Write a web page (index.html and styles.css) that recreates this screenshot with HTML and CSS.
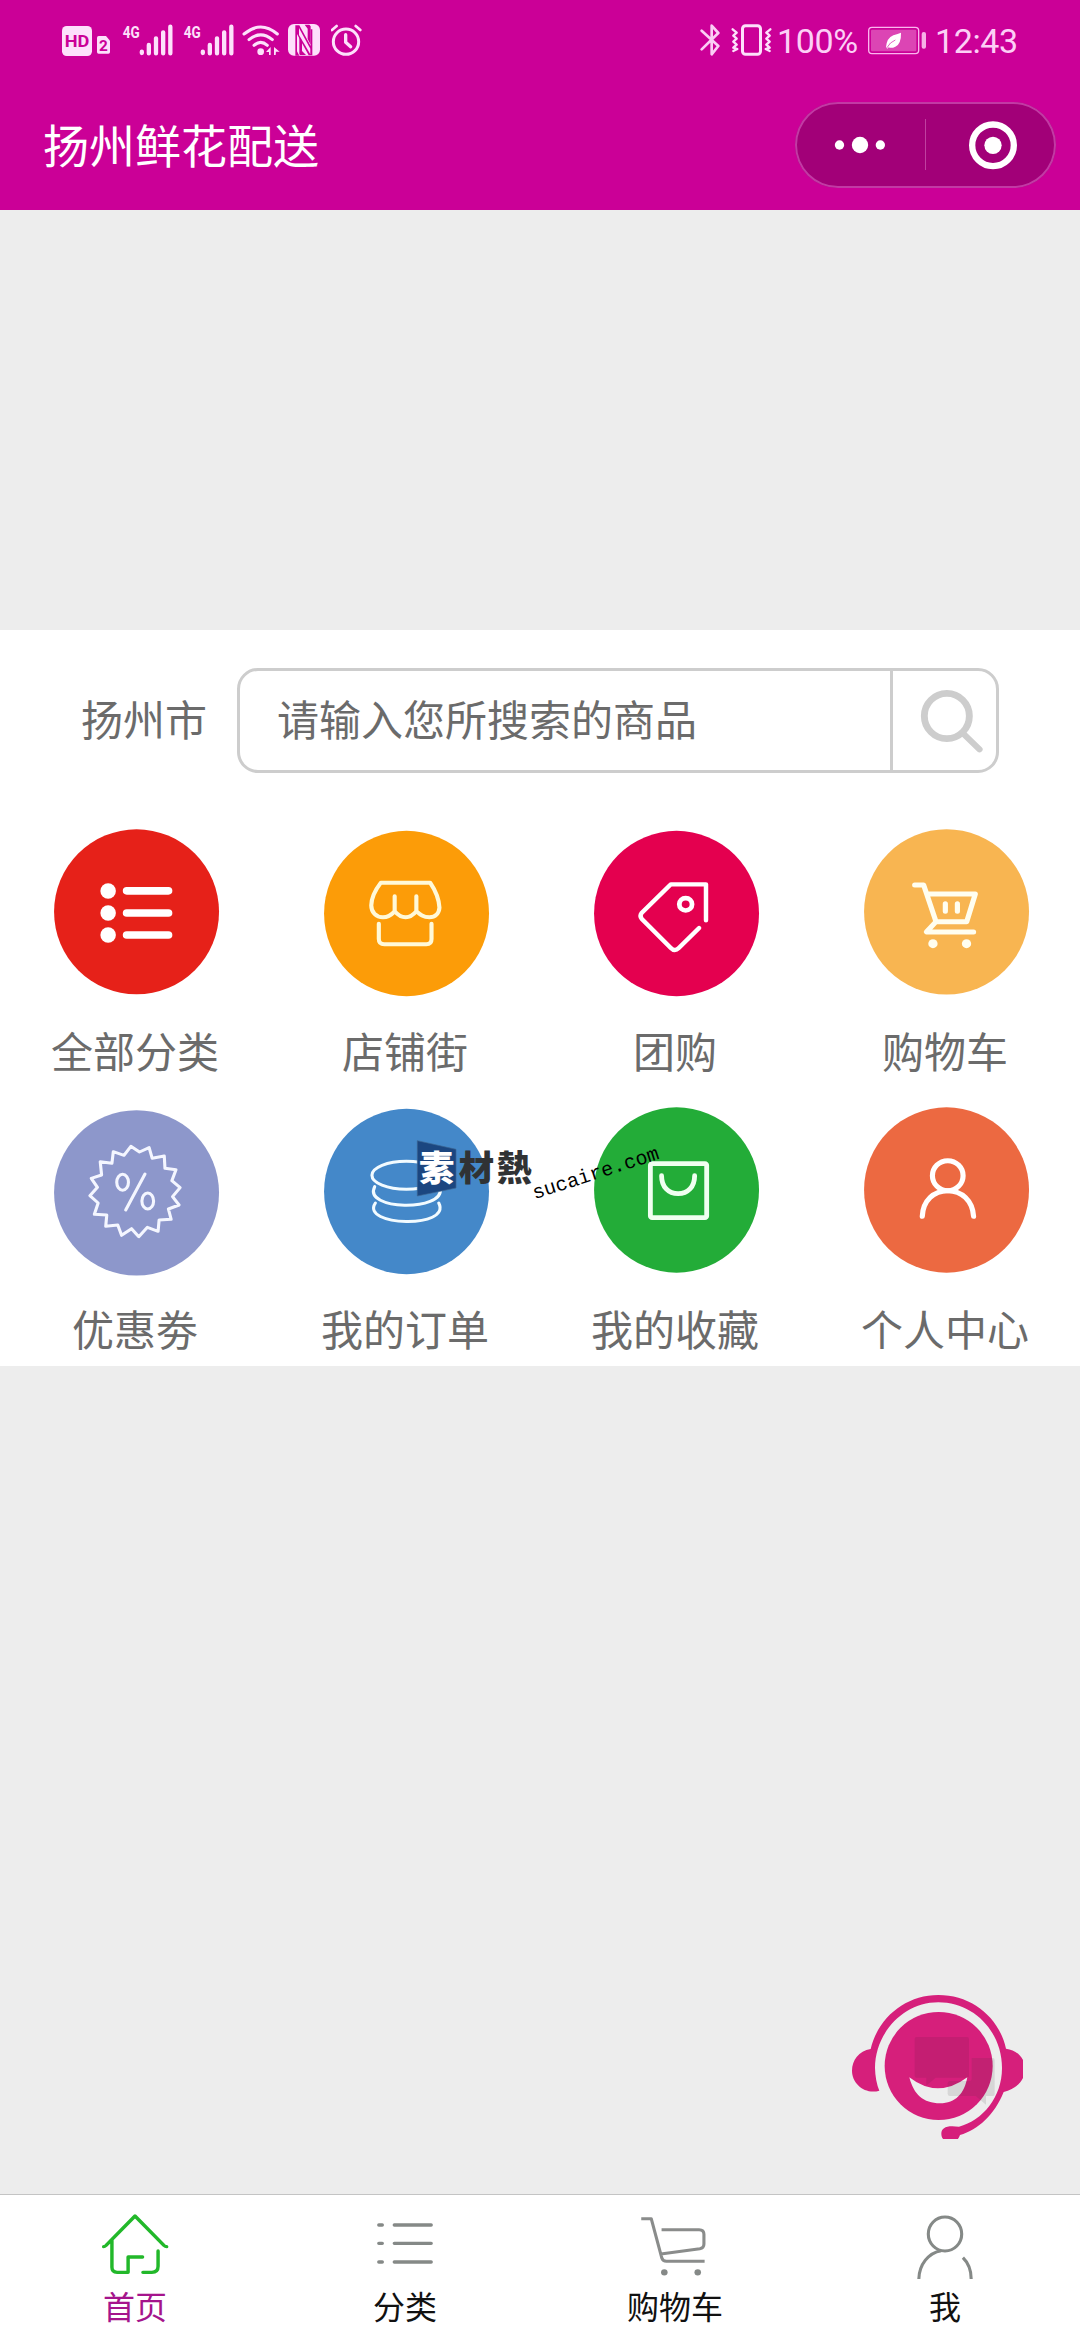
FILE: index.html
```html
<!DOCTYPE html>
<html lang="zh-CN">
<head>
<meta charset="utf-8">
<title>扬州鲜花配送</title>
<link rel="stylesheet" href="styles.css">
</head>
<body>
<div class="app">
  <header class="header">
    <div class="status">
      <div class="status-left">
        <svg class="hd" width="30" height="36" viewBox="66 66 90 108"><rect x="66" y="78" width="90" height="90" rx="14" fill="#fde0fb"/><text x="111" y="142" text-anchor="middle" textLength="74" lengthAdjust="spacingAndGlyphs" class="hd-text">HD</text></svg>
        <svg class="sim" width="13" height="36" viewBox="171 66 39 108"><path d="M176 108h22l12 14v34q0 5-5 5h-29q-5 0-5-5v-43q0-5 5-5z" fill="#fde0fb"/><text x="190" y="154" text-anchor="middle" class="sim-text">2</text></svg>
        <svg class="signal" width="51" height="36" viewBox="246 66 153 108"><text x="248" y="113" textLength="51" lengthAdjust="spacingAndGlyphs" class="net-text">4G</text><g stroke="#fde0fb" stroke-width="13" stroke-linecap="round"><path d="M305.500 155v4M326.500 135v25M348 115v45M369.500 97v63M391 80v80"/></g></svg>
        <svg class="signal2" width="51" height="36" viewBox="246 66 153 108"><text x="248" y="113" textLength="51" lengthAdjust="spacingAndGlyphs" class="net-text">4G</text><g stroke="#fde0fb" stroke-width="13" stroke-linecap="round"><path d="M305.500 155v4M326.500 135v25M348 115v45M369.500 97v63M391 80v80"/></g></svg>
        <svg class="wifi" width="38" height="36" viewBox="606 66 114 108"><g fill="none" stroke="#fde0fb" stroke-width="9" stroke-linecap="round"><path d="M612 102Q662 60 712 102M627 119Q662 90 697 119M642 136Q662 118 682 136"/></g><circle cx="662" cy="155" r="10" fill="#fde0fb"/><path d="M678 156l14-15v24h-5v-9zM702 141l17 14h-11v-2l-1 12h-5z" fill="#fde0fb"/></svg>
        <svg class="nfc" width="32" height="36" viewBox="744 66 96 108"><rect x="744" y="72" width="96" height="95" rx="18" fill="#fde0fb"/><path d="M766 76h12l34 62V88h5v78h-11l-35-64v52l7 13h-12z" fill="#cb0097"/><path d="M777 84l34 62v17l-34-58z" fill="#fde0fb"/><path d="M778 109l8 14v30l12 12h-18l-2-3zM812 134l-9-17V86l-9-12h14l4 5z" fill="#cb0097"/></svg>
        <svg class="alarm" width="31" height="36" viewBox="873 66 93 108"><g fill="none" stroke="#fde0fb" stroke-linecap="round" stroke-linejoin="round"><circle cx="918" cy="125" r="38" stroke-width="9"/><path d="M917 104v23l15 13" stroke-width="10"/><path d="M876 90l14-12M947 78l14 12" stroke-width="8"/></g></svg>
      </div>
      <div class="status-right">
        <svg class="bt" width="21" height="36" viewBox="57 66 63 108"><path d="M62 92l50 46-20 25V77l20 22-50 49" fill="none" stroke="#fbcdf5" stroke-width="8" stroke-linejoin="round" stroke-linecap="round"/></svg>
        <svg class="vib" width="41" height="36" viewBox="150 66 123 108"><g fill="none" stroke="#fde0fb" stroke-linejoin="round" stroke-linecap="round"><rect x="184.500" y="77" width="54" height="86" rx="9" stroke-width="9"/><path d="M155 88l12 10-10 9 10 9-10 9 10 9-10 9 12 4-12 6M268 88l-12 10 10 9-10 9 10 9-10 9 10 9-12 4 12 6" stroke-width="7"/></g></svg>
        <span class="pct">100%</span>
        <svg class="batt" width="60" height="36" viewBox="558 66 180 108"><rect x="563" y="82" width="150" height="79" rx="10" fill="none" stroke="#fbb5ee" stroke-width="4"/><rect x="570" y="89" width="136" height="65" rx="4" fill="#dc45b4"/><rect x="722" y="96" width="13" height="50" rx="6" fill="#f6b0e6"/><path d="M619 146l-4-4q2-28 22-36 14-4 23-8 1 34-17 42-12 6-20 2z" fill="#fff"/><path d="M617 144q10-18 26-24" fill="none" stroke="#dc45b4" stroke-width="2.500"/></svg>
        <span class="time">12:43</span>
      </div>
    </div>
    <div class="titlebar">
      <h1 class="title">扬州鲜花配送</h1>
      <div class="capsule">
        <svg width="261" height="86" viewBox="345 306 783 258"><g fill="#fff"><circle cx="478.500" cy="435" r="14"/><circle cx="540" cy="435" r="24.500"/><circle cx="601" cy="435" r="14"/><circle cx="939" cy="436" r="26"/></g><path d="M736.500 357v153" stroke="#c040a0" stroke-width="3"/><circle cx="939" cy="436" r="62.500" fill="none" stroke="#fff" stroke-width="19"/></svg>
      </div>
    </div>
  </header>
  <main class="content">
    <div class="banner"></div>
    <section class="panel">
      <div class="search-row">
        <span class="city">扬州市</span>
        <div class="search">
          <span class="placeholder">请输入您所搜索的商品</span>
          <div class="search-btn"><svg width="66" height="66" viewBox="1100 203 192 198" preserveAspectRatio="none"><ellipse cx="1181" cy="287" rx="65.500" ry="68" fill="none" stroke="#cdcdcd" stroke-width="20"/><path d="M1231 342l45 45" stroke="#cdcdcd" stroke-width="18" stroke-linecap="round"/></svg></div>
        </div>
      </div>
      <nav class="grid">
        <a class="cell">
          <svg width="270" height="180" viewBox="0 78 784 540" preserveAspectRatio="none"><ellipse cx="396.500" cy="335.500" rx="239.500" ry="247.500" fill="#e62119"/><g fill="#fff"><ellipse cx="314" cy="273" rx="22.500" ry="23"/><ellipse cx="314" cy="339" rx="22.500" ry="23"/><ellipse cx="314" cy="405" rx="22.500" ry="23"/></g><path d="M368 272.500h121M368 339h121M368 405h121" stroke="#fff" stroke-width="23" stroke-linecap="round"/></svg>
          <span>全部分类</span>
        </a>
        <a class="cell">
          <svg width="270" height="180" viewBox="784 78 784 540" preserveAspectRatio="none"><ellipse cx="1180.500" cy="340.500" rx="239.500" ry="248" fill="#fc9c08"/><path d="M1106 248h143q25 38 27 75c-1 17-12 29-29 29-18 0-27-8-38-18-9 11-18 18-31 18s-23-7-32-18c-9 10-18 18-34 18-20 0-34-15-34-36q1-32 28-68zM1146 289v44M1209 289v44M1100 371v46q0 16 16 16h122q15 0 15-16v-46" fill="none" stroke="#fff9d8" stroke-width="12" stroke-linecap="round" stroke-linejoin="round"/></svg>
          <span>店铺街</span>
        </a>
        <a class="cell">
          <svg width="270" height="180" viewBox="0 78 784 540" preserveAspectRatio="none"><ellipse cx="396.500" cy="340.500" rx="239.500" ry="248" fill="#e4004f"/><path d="M482 361V253H380l-85 86q-6 8 0 17l85 88q11 12 23 0l59-60" fill="none" stroke="#fff" stroke-width="13" stroke-linecap="round" stroke-linejoin="round"/><circle cx="423" cy="313" r="18.500" fill="none" stroke="#fff" stroke-width="14"/></svg>
          <span>团购</span>
        </a>
        <a class="cell">
          <svg width="270" height="180" viewBox="784 78 784 540" preserveAspectRatio="none"><ellipse cx="1180.500" cy="335.500" rx="239.500" ry="248" fill="#f8b551"/><g fill="none" stroke="#fffef0" stroke-width="15" stroke-linecap="round" stroke-linejoin="round"><path d="M1088 255h26l36 110-28 31h137M1128 282h136l-25 83h-90M1177 311v23M1212 311v23"/></g><circle cx="1141" cy="431" r="13.500" fill="#fffef0"/><circle cx="1238.500" cy="431" r="13.500" fill="#fffef0"/></svg>
          <span>购物车</span>
        </a>
        <a class="cell">
          <svg width="270" height="180" viewBox="0 42 784 540" preserveAspectRatio="none"><ellipse cx="396.500" cy="308.500" rx="239.500" ry="248" fill="#8d97cb"/><path d="M380 169L405 186 433 173 442 205 477 198 479 235 511 239 499 272 523 293 501 320 520 345 489 357 497 388 462 390 459 424 428 412 403 440 382 416 353 436 342 405 307 409 310 375 274 373 285 339 261 317 283 292 265 265 295 255 291 215 325 220 329 185 360 196Z" fill="none" stroke="#f4f6ff" stroke-width="9" stroke-linejoin="round"/><g fill="none" stroke="#f4f6ff" stroke-width="9" stroke-linecap="round"><ellipse cx="356" cy="277" rx="17" ry="24"/><ellipse cx="429" cy="333" rx="17" ry="24"/><path d="M421 252l-56 108"/></g></svg>
          <span>优惠劵</span>
        </a>
        <a class="cell">
          <svg width="270" height="180" viewBox="784 42 784 540" preserveAspectRatio="none"><ellipse cx="1180.500" cy="304.500" rx="239.500" ry="248" fill="#4488c9"/><g fill="none" stroke="#f2fbff" stroke-width="9" stroke-linecap="round"><ellipse cx="1180" cy="256" rx="100" ry="42"/><path d="M1088 290c-35 72 203 74 190 6M1090 339c-46 70 223 78 184 0"/></g></svg>
          <span>我的订单</span>
        </a>
        <a class="cell">
          <svg width="270" height="180" viewBox="0 42 784 540" preserveAspectRatio="none"><ellipse cx="396.500" cy="300" rx="239.500" ry="248" fill="#23ac38"/><rect x="320.500" y="221" width="163.500" height="162" rx="5" fill="none" stroke="#f0fff0" stroke-width="14"/><path d="M353 257c0 34 20 54 48 54s48-20 48-54" fill="none" stroke="#f0fff0" stroke-width="14" stroke-linecap="round"/></svg>
          <span>我的收藏</span>
        </a>
        <a class="cell">
          <svg width="270" height="180" viewBox="784 42 784 540" preserveAspectRatio="none"><ellipse cx="1180.500" cy="300" rx="239.500" ry="248" fill="#ec6941"/><g fill="none" stroke="#fff" stroke-width="15" stroke-linecap="round"><ellipse cx="1184" cy="257" rx="44.500" ry="45"/><path d="M1110 379c2-48 34-77 74-77s72 29 75 77"/></g></svg>
          <span>个人中心</span>
        </a>
      </nav>
    </section>
  </main>
  <footer class="tabs">
    <a class="tab active">
      <svg width="270" height="100" viewBox="0 45 784 300" preserveAspectRatio="none"><g fill="none" stroke="#22b82a" stroke-width="10" stroke-linecap="round" stroke-linejoin="round"><path d="M301 200q3 0 7-4l84-88 84 88q4 4 8 4M325 180v82q0 15 15 15h32v-46h42M459 213v46q0 18-18 18h-26"/></g></svg>
      <span>首页</span>
    </a>
    <a class="tab">
      <svg width="270" height="100" viewBox="784 45 784 300" preserveAspectRatio="none"><path d="M1100 135h10M1100 190h10M1100 246h10M1145 135h107M1145 190h107M1145 246h107" stroke="#858987" stroke-width="10" stroke-linecap="round"/></svg>
      <span>分类</span>
    </a>
    <a class="tab">
      <svg width="270" height="100" viewBox="0 45 784 300" preserveAspectRatio="none"><path d="M294 116h29l31 119q3 9 13 9h111M353 149h109q14 0 14 14v29q0 12-12 14l-113 16" fill="none" stroke="#8a8c8b" stroke-width="9" stroke-linejoin="round"/><circle cx="361" cy="277" r="9.500" fill="#858987"/><circle cx="458" cy="277" r="9.500" fill="#858987"/></svg>
      <span>购物车</span>
    </a>
    <a class="tab">
      <svg width="270" height="100" viewBox="784 45 784 300" preserveAspectRatio="none"><g fill="none" stroke="#858987" stroke-width="9"><ellipse cx="1176" cy="162" rx="48.500" ry="51"/><path d="M1165 212c-37 6-64 42-65 85M1228 233c14 14 24 38 24 64"/></g></svg>
      <span>我</span>
    </a>
  </footer>
  <svg class="watermark" width="280" height="100" viewBox="0 0 840 300"><path d="M52 62l116 26v116L52 228z" fill="#1b4680" stroke="#3d6591" stroke-width="2"/><text x="57" y="184" class="wm-cjk wm-light">素</text><text x="176" y="184" class="wm-cjk">材</text><text x="290" y="184" class="wm-cjk">熱</text><text x="404" y="238" class="wm-url" transform="rotate(-18 404 238)">sucaire.com</text></svg>
  <svg class="service" width="171" height="144" viewBox="96 105 513 432"><g fill="#d61f7b"><circle cx="356" cy="318" r="162"/><path d="M152 267c-36 6-56 34-56 65 0 39 38 72 82 60q-12-28-13-68c0-105 85-197 190-197 106 0 191 87 191 197 0 88-58 157-129 176-36-5-53 2-53 21 0 12 7 22 18 22h22c7 0 12-8 16-18 55-16 103-60 131-129 39-10 64-35 64-69 0-32-23-57-57-61-20-93-102-161-203-161-98 0-181 68-203 162z"/></g><path d="M268 352q85 66 174 0c-9 49-35 78-82 78-50 0-79-26-92-78z" fill="#eee"/><g fill="#5c1846" opacity=".15"><path d="M290 231h151q6 0 6 6v110q0 6-6 6h-94l-28 24v-24h-29q-6 0-6-6V237q0-6 6-6z"/></g><path d="M455 294h63q6 0 6 6v103q0 5-5 5h-21v26l-31-26h-77q-7 0-7-7v-31q0-6 6-7h60q6 0 6-6z" fill="#333" opacity=".12"/></svg>
</div>
</body>
</html>
```
FILE: styles.css
```css
* { box-sizing: border-box; }
body {
  margin: 0;
  background: #ededed;
  font-family: Roboto, "Noto Sans CJK SC", sans-serif;
}
svg { display: block; flex: none; }
.app {
  position: relative;
  display: flex;
  flex-direction: column;
  width: 1080px;
  height: 2340px;
  overflow: hidden;
}
.header {
  height: 210px;
  background: #cb0097;
}
.status {
  display: flex;
  justify-content: space-between;
  height: 80px;
  padding: 22px 60px 0 62px;
  color: #fccff6;
  font-size: 34px;
  line-height: 38px;
}
.status-left, .status-right { display: flex; }
.sim { margin-left: 5px; }
.signal { margin-left: 12px; }
.signal2 { margin-left: 10px; }
.wifi { margin-left: 8px; }
.nfc { margin-left: 8px; }
.alarm { margin-left: 11px; }
.hd-text { font: 700 52px Roboto, sans-serif; fill: #cb0097; }
.sim-text { font: 700 46px Roboto, sans-serif; fill: #cb0097; }
.net-text { font: 700 52px Roboto, sans-serif; fill: #fde0fb; }
.vib { margin-left: 10px; }
.pct { width: 81px; margin-left: 5px; letter-spacing: -0.4px; white-space: nowrap; }
.batt { margin-left: 9px; }
.time { width: 85px; margin-left: 8px; letter-spacing: -0.4px; white-space: nowrap; }
.titlebar {
  display: flex;
  justify-content: space-between;
  align-items: flex-start;
  padding: 22px 24px 0 43px;
}
.title {
  margin: 15px 0 0;
  color: #fff;
  font-size: 46px;
  font-weight: 400;
  line-height: 60px;
}
.capsule {
  width: 261px;
  height: 86px;
  border-radius: 43px;
  background: #a20078;
  box-shadow: inset 0 0 0 2px #c23aa4;
}
.content { flex: 1; }
.banner { height: 420px; }
.panel {
  height: 736px;
  padding-top: 38px;
  background: #fff;
  color: #6b6b6b;
  font-size: 42px;
}
.search-row {
  display: flex;
  align-items: center;
  height: 105px;
  padding: 0 81px;
}
.city { width: 156px; line-height: 90px; margin-top: 3px; }
.search {
  display: flex;
  width: 762px;
  height: 105px;
  border: 3px solid #cdcdcd;
  border-radius: 21px;
}
.placeholder {
  flex: 1;
  padding-left: 37px;
  line-height: 102px;
}
.search-btn {
  width: 106px;
  border-left: 3px solid #cdcdcd;
  padding: 17px 0 0 26px;
}
.grid {
  display: grid;
  grid-template-columns: repeat(4, 270px);
  grid-auto-rows: 278px;
  margin-top: 53px;
}
.cell {
  display: flex;
  flex-direction: column;
  align-items: center;
}
.cell span { margin-top: 17px; line-height: 62px; }
.tabs {
  display: flex;
  height: 146px;
  border-top: 1px solid #c4c4c4;
  background: #fff;
  color: #111;
  font-size: 32px;
}
.tab {
  display: flex;
  flex-direction: column;
  align-items: center;
  width: 270px;
}
.tab span { margin-top: -7px; line-height: 40px; }
.active { color: #a5148c; }
.watermark {
  position: absolute;
  left: 400px;
  top: 1120px;
}
.wm-cjk {
  font: 900 106px "Noto Sans CJK TC", sans-serif;
  fill: #303234;
}
.wm-light { fill: #fff; }
.wm-url {
  font: 60px "Liberation Mono", monospace;
  fill: #000;
}
.service {
  position: absolute;
  left: 852px;
  top: 1995px;
}
```
